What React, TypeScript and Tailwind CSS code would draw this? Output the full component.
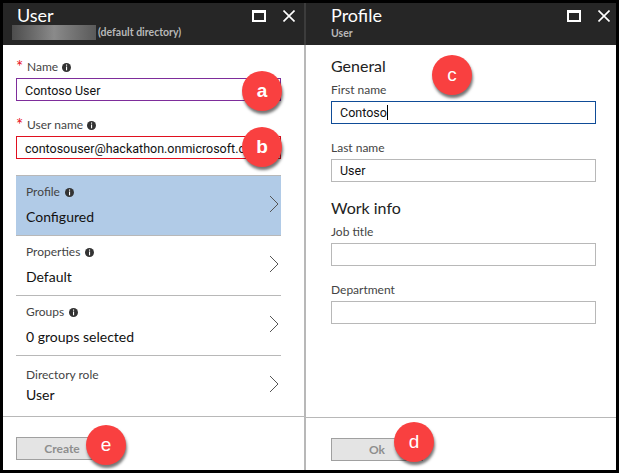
// Two Azure portal blades side by side: User and Profile
function InfoDot() {
  return (
    <svg width="9" height="9" viewBox="0 0 9 9" className="shrink-0">
      <circle cx="4.5" cy="4.5" r="4.5" fill="#333" />
      <rect x="4" y="1.5" width="1.1" height="1.2" fill="#fff" />
      <rect x="4" y="3.5" width="1.1" height="3.8" fill="#fff" />
    </svg>
  );
}

function Chevron() {
  return (
    <svg width="10" height="18" viewBox="0 0 10 18" className="shrink-0 -mt-[3px]">
      <path d="M1 1l8 8-8 8" fill="none" stroke="#555" strokeWidth="1" />
    </svg>
  );
}

function BladeHeader({ right, children }: { right: string; children: React.ReactNode }) {
  return (
    <div className="h-[42px] bg-[#262626] flex justify-between shrink-0">
      <div className="flex flex-col">{children}</div>
      <div className={`flex items-start gap-[17px] pt-[7px] ${right}`}>
        <svg width="14" height="12" viewBox="0 0 14 12">
          <path d="M0 0h14v12H0z M2 3v7h10V3z" fill="#fff" fillRule="evenodd" />
        </svg>
        <svg width="12" height="12" viewBox="0 0 12 12">
          <path d="M0.5 0.5l11 11M11.5 0.5l-11 11" stroke="#fff" strokeWidth="1.6" />
        </svg>
      </div>
    </div>
  );
}

function Badge({ letter, className }: { letter: string; className: string }) {
  return (
    <div
      className={`absolute w-[40px] h-[40px] rounded-full bg-[#f94040] text-white text-[19px] flex items-center justify-center shadow-[1px_3px_3px_rgba(0,0,0,0.55)] font-["Liberation_Sans",sans-serif] ${className}`}
    >
      {letter}
    </div>
  );
}

function Field({ label, value, border }: { label: string; value: string; border: string }) {
  return (
    <div>
      <div className="flex items-center gap-[4px] h-[22px] text-[12px] text-[#444]">
        <span className="text-[#e81123] w-[7px] text-[17px] leading-[22px]">*</span>
        <span>{label}</span>
        <InfoDot />
      </div>
      <div className={`h-[23px] border ${border} px-[8px] font-["Roboto",sans-serif] text-[12.5px] leading-[23px] text-[#111] overflow-hidden whitespace-nowrap`}>
        {value}
      </div>
    </div>
  );
}

function NavRow({ label, value, info, tight, active }: { label: string; value: string; info?: boolean; tight?: boolean; active?: boolean }) {
  return (
    <div className={`h-[60px] border-t border-[#b8b8b8] pl-[10px] pr-[2px] flex items-center justify-between ${active ? 'bg-[#b1cbe7]' : ''}`}>
      <div>
        <div className="flex items-center gap-[5px] text-[12px] leading-[18px] text-[#444]">
          {label}
          {info && <InfoDot />}
        </div>
        <div className={`text-[14px] leading-[22px] text-[#111] ${tight ? '' : 'mt-[5px]'}`}>{value}</div>
      </div>
      <Chevron />
    </div>
  );
}

function TextBox({ label, value, focused }: { label: string; value?: string; focused?: boolean }) {
  return (
    <div>
      <div className="text-[12px] leading-[18px] text-[#444] mb-[2px]">{label}</div>
      <div className={`h-[23px] border px-[8px] font-["Roboto",sans-serif] text-[12.5px] leading-[22px] text-[#111] ${focused ? 'border-[#0f4c97]' : 'border-[#b8b8b8]'}`}>
        {value}
        {focused && <span className="inline-block w-px h-[15px] bg-black align-[-3px]" />}
      </div>
    </div>
  );
}

function Footer({ label, inset }: { label: string; inset: string }) {
  return (
    <div className={`flex-1 border-t border-[#b8b8b8] pt-[20px] ${inset}`}>
      <div className="w-[92px] h-[23px] border border-[#a0a0a0] bg-[#e4e4e4] flex items-center justify-center text-[12px] font-bold text-[#8e8e8e]">
        {label}
      </div>
    </div>
  );
}

export default function App() {
  return (
    <div className='relative w-[619px] h-[473px] overflow-hidden bg-black p-[3px] flex font-["Lato","Noto_Sans",sans-serif]'>
      {/* User blade */}
      <div className="w-[301px] bg-white flex flex-col">
        <BladeHeader right="pr-[9px]">
          <div className="h-[22px] pl-[14px] text-[18px] leading-[24px] text-white">User</div>
          <div className="flex items-center">
            <div className="ml-[9px] w-[84px] h-[15px] bg-gradient-to-r from-[#4d4d4d] via-[#8a8a8a] to-[#5a5a5a]" />
            <span className="ml-[2px] -mt-[1px] text-[10.5px] leading-[13px] font-bold text-[#b8b8b8]">(default directory)</span>
          </div>
        </BladeHeader>
        <div className="h-[130px] pl-[13px] pr-[23px] pt-[11px] flex flex-col gap-[13px]">
          <Field label="Name" value="Contoso User" border="border-[#7e2d9b]" />
          <Field label="User name" value="contosouser@hackathon.onmicrosoft.com" border="border-[#e0101f]" />
        </div>
        <div className="ml-[13px] mr-[23px] pb-px">
          <NavRow label="Profile" value="Configured" info active />
          <NavRow label="Properties" value="Default" info />
          <NavRow label="Groups" value="0 groups selected" info />
          <NavRow label="Directory role" value="User" tight />
        </div>
        <Footer label="Create" inset="pl-[13px]" />
      </div>

      {/* divider: dark beside the header, grey below it */}
      <div className="w-[2px] flex flex-col">
        <div className="h-[42px] bg-[#3c3c3c]" />
        <div className="flex-1 bg-[#b8b8b8]" />
      </div>

      {/* Profile blade */}
      <div className="flex-1 bg-white flex flex-col">
        <BladeHeader right="pr-[6px]">
          <div className="h-[22px] pl-[25px] text-[18px] leading-[24px] text-white">Profile</div>
          <div className="pl-[25px] text-[10.5px] leading-[13px] font-bold text-[#b8b8b8] mt-[2px]">User</div>
        </BladeHeader>
        <div className="h-[372px] pl-[25px] pr-[20px] pt-[10px]">
          <div className="text-[16px] leading-[22px] text-[#222]">General</div>
          <div className="mt-[4px] flex flex-col gap-[15px]">
            <TextBox label="First name" value="Contoso" focused />
            <TextBox label="Last name" value="User" />
          </div>
          <div className="text-[16px] leading-[22px] text-[#222] mt-[15px]">Work info</div>
          <div className="mt-[4px] flex flex-col gap-[15px]">
            <TextBox label="Job title" />
            <TextBox label="Department" />
          </div>
        </div>
        <Footer label="Ok" inset="pl-[25px]" />
      </div>

      <Badge letter="a" className="left-[242px] top-[71px] font-bold" />
      <Badge letter="b" className="left-[242px] top-[127px] font-bold" />
      <Badge letter="c" className="left-[432px] top-[55px]" />
      <Badge letter="d" className="left-[394px] top-[422px]" />
      <Badge letter="e" className="left-[86px] top-[425px]" />
    </div>
  );
}
